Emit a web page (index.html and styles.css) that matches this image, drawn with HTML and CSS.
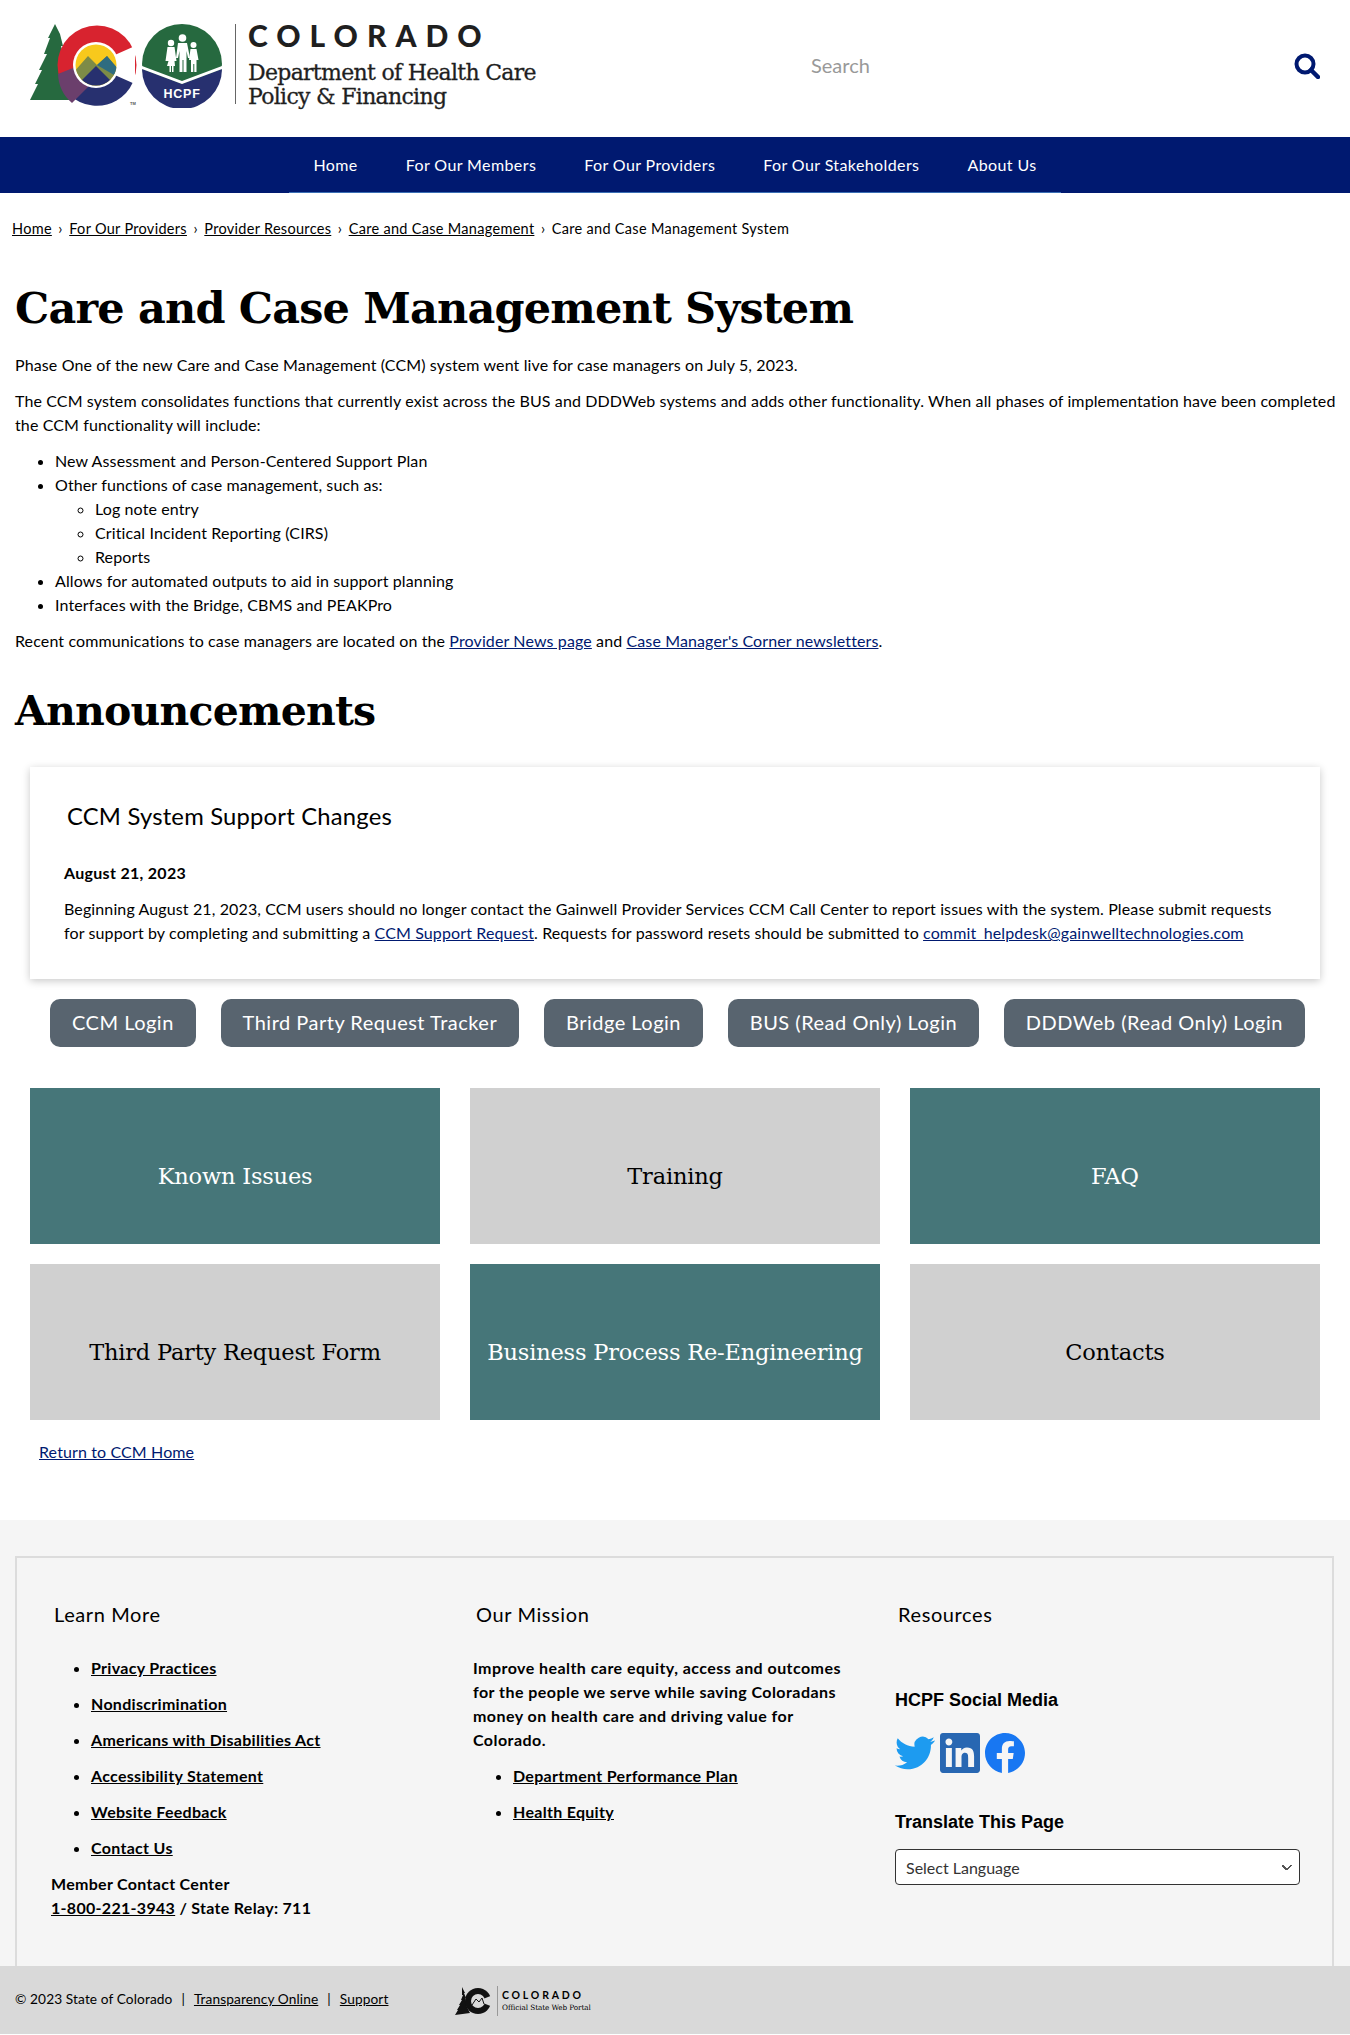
FILE: index.html
```html
<!DOCTYPE html>
<html lang="en">
<head>
<meta charset="utf-8">
<title>Care and Case Management System</title>
<link rel="stylesheet" href="styles.css">
</head>
<body>
<header class="site-header">
  <a class="brand" href="#">
    <svg class="logo" width="205" height="90" viewBox="25 18 205 90" aria-label="HCPF logo">
      <path d="M55 24l5 10 3 12-2 0 4 14-1 0 8 40-42 0 8-16-3 0 7-14-3 0 8-16-3 0 6-16-2 0z" fill="#26693f"/>
      <circle cx="97" cy="65" r="39.5" fill="#d8232f"/>
      <path d="M58 74a39.500 39.500 0 0 0 75 8l-20-8-55 0z" fill="#27306f"/>
      <path d="M58 74l20-8 14 17-20 20a40 40 0 0 1-14-29z" fill="#6b3f6c"/>
      <path d="M135 46L135 84 108 72 108 58z" fill="#fff"/>
      <circle cx="96" cy="65" r="23" fill="#fff"/>
      <clipPath id="sun"><circle cx="96" cy="65" r="20.500"/></clipPath>
      <g clip-path="url(#sun)">
        <rect x="74" y="43" width="44" height="44" fill="#f8c91c"/>
        <path d="M74 72l14-16 9 9 10-9 12 14v18H74z" fill="#7d8b47"/>
        <path d="M97 65l10-9 12 14v8z" fill="#2f6c80"/>
        <path d="M74 88l22-22 22 22z" fill="#27306f"/>
      </g>
      <text class="tm" x="136" y="105" text-anchor="end">TM</text>
      <circle cx="182" cy="64" r="40" fill="#26693f"/>
      <path d="M142 69l40 15 40-15a40 40 0 0 1-80 0z" fill="#27306f"/>
      <path d="M142 66l40 15 40-15 0 3-40 15-40-15z" fill="#fff"/>
      <g fill="#fff">
        <circle cx="171" cy="43" r="3.200"/>
        <path d="M167.500 47h7l2 14h-2l.5 5h-1.500v6h-1.500v-6h-1v6H169.500v-6H167l1.500-5h-3z"/>
        <circle cx="182.500" cy="38" r="3.800"/>
        <path d="M178 43h9l3 15h-2l-1.500-7v21h-3v-12h-1v12h-3V51l-1.500 7h-2z"/>
        <circle cx="193.500" cy="45" r="3"/>
        <path d="M190.500 49h6l2 11h-2v12h-2.200v-8h-1v8h-2.300V60h-2z"/>
      </g>
      <text class="hcpf" x="182" y="98" text-anchor="middle">HCPF</text>
    </svg>
    <span class="brand-rule"></span>
    <span class="brand-text">
      <span class="brand-state">COLORADO</span>
      <span class="brand-dept">Department of Health Care<br>Policy &amp; Financing</span>
    </span>
  </a>
  <form class="search">
    <span class="search-label">Search</span>
    <svg class="search-icon" width="26" height="26" viewBox="0 0 26 26" aria-hidden="true">
      <circle cx="11" cy="11" r="8.500" fill="none" stroke="#001970" stroke-width="4"/>
      <path d="M17 17l7 7" stroke="#001970" stroke-width="4.500" stroke-linecap="round"/>
    </svg>
  </form>
</header>

<nav class="main-nav">
  <ul class="nav-list">
    <li><a href="#">Home</a></li>
    <li><a href="#">For Our Members</a></li>
    <li><a href="#">For Our Providers</a></li>
    <li><a href="#">For Our Stakeholders</a></li>
    <li><a href="#">About Us</a></li>
  </ul>
</nav>

<div class="breadcrumb">
  <a href="#">Home</a><span class="sep">›</span><a href="#">For Our Providers</a><span class="sep">›</span><a href="#">Provider Resources</a><span class="sep">›</span><a href="#">Care and Case Management</a><span class="sep">›</span><span>Care and Case Management System</span>
</div>

<main class="content">
  <h1>Care and Case Management System</h1>
  <p>Phase One of the new Care and Case Management (CCM) system went live for case managers on July 5, 2023.</p>
  <p class="wide">The CCM system consolidates functions that currently exist across the BUS and DDDWeb systems and adds other functionality. When all phases of implementation have been completed the CCM functionality will include:</p>
  <ul class="features">
    <li>New Assessment and Person-Centered Support Plan</li>
    <li>Other functions of case management, such as:
      <ul>
        <li>Log note entry</li>
        <li>Critical Incident Reporting (CIRS)</li>
        <li>Reports</li>
      </ul>
    </li>
    <li>Allows for automated outputs to aid in support planning</li>
    <li>Interfaces with the Bridge, CBMS and PEAKPro</li>
  </ul>
  <p>Recent communications to case managers are located on the <a class="link" href="#">Provider News page</a> and <a class="link" href="#">Case Manager's Corner newsletters</a>.</p>
  <h2>Announcements</h2>

  <section class="card">
    <h3>CCM System Support Changes</h3>
    <p class="card-date">August 21, 2023</p>
    <p class="card-body">Beginning August 21, 2023, CCM users should no longer contact the Gainwell Provider Services CCM Call Center to report issues with the system. Please submit requests for support by completing and submitting a <a class="link" href="#">CCM Support Request</a>. Requests for password resets should be submitted to <a class="link" href="#">commit_helpdesk@gainwelltechnologies.com</a></p>
  </section>

  <div class="buttons">
    <a class="btn" href="#">CCM Login</a>
    <a class="btn" href="#">Third Party Request Tracker</a>
    <a class="btn" href="#">Bridge Login</a>
    <a class="btn" href="#">BUS (Read Only) Login</a>
    <a class="btn" href="#">DDDWeb (Read Only) Login</a>
  </div>

  <div class="tiles">
    <a class="tile teal" href="#">Known Issues</a>
    <a class="tile grey" href="#">Training</a>
    <a class="tile teal" href="#">FAQ</a>
    <a class="tile grey" href="#">Third Party Request Form</a>
    <a class="tile teal" href="#">Business Process Re-Engineering</a>
    <a class="tile grey" href="#">Contacts</a>
  </div>

  <p class="return"><a class="link" href="#">Return to CCM Home</a></p>
</main>

<footer class="site-footer">
  <div class="footer-box">
    <div class="footer-col">
      <h4>Learn More</h4>
      <ul class="footer-list">
        <li><a href="#">Privacy Practices</a></li>
        <li><a href="#">Nondiscrimination</a></li>
        <li><a href="#">Americans with Disabilities Act</a></li>
        <li><a href="#">Accessibility Statement</a></li>
        <li><a href="#">Website Feedback</a></li>
        <li><a href="#">Contact Us</a></li>
      </ul>
      <p class="footer-text">Member Contact Center<br><a href="#">1-800-221-3943</a> / State Relay: 711</p>
    </div>
    <div class="footer-col">
      <h4>Our Mission</h4>
      <p class="footer-text mission">Improve health care equity, access and outcomes for the people we serve while saving Coloradans money on health care and driving value for Colorado.</p>
      <ul class="footer-list">
        <li><a href="#">Department Performance Plan</a></li>
        <li><a href="#">Health Equity</a></li>
      </ul>
    </div>
    <div class="footer-col">
      <h4>Resources</h4>
      <h5 class="social-title">HCPF Social Media</h5>
      <div class="social">
        <svg width="40" height="40" viewBox="0 0 24 24" aria-label="Twitter"><path fill="#1d9bf0" d="M23.953 4.57a10 10 0 01-2.825.775 4.958 4.958 0 002.163-2.723c-.951.555-2.005.959-3.127 1.184a4.920 4.920 0 00-8.384 4.482C7.690 8.095 4.067 6.130 1.640 3.162a4.822 4.822 0 00-.666 2.475c0 1.710.870 3.213 2.188 4.096a4.904 4.904 0 01-2.228-.616v.060a4.923 4.923 0 003.946 4.827 4.996 4.996 0 01-2.212.085 4.936 4.936 0 004.604 3.417 9.867 9.867 0 01-6.102 2.105c-.390 0-.779-.023-1.170-.067a13.995 13.995 0 007.557 2.209c9.053 0 13.998-7.496 13.998-13.985 0-.210 0-.420-.015-.630A9.935 9.935 0 0024 4.590z"/></svg>
        <svg width="40" height="40" viewBox="0 0 24 24" aria-label="LinkedIn"><path fill="#2867b2" d="M20.447 20.452h-3.554v-5.569c0-1.328-.027-3.037-1.852-3.037-1.853 0-2.136 1.445-2.136 2.939v5.667H9.351V9h3.414v1.561h.046c.477-.900 1.637-1.850 3.370-1.850 3.601 0 4.267 2.370 4.267 5.455v6.286zM5.337 7.433c-1.144 0-2.063-.926-2.063-2.065 0-1.138.920-2.063 2.063-2.063 1.140 0 2.064.925 2.064 2.063 0 1.139-.925 2.065-2.064 2.065zm1.782 13.019H3.555V9h3.564v11.452zM22.225 0H1.771C.792 0 0 .774 0 1.729v20.542C0 23.227.792 24 1.771 24h20.451C23.200 24 24 23.227 24 22.271V1.729C24 .774 23.200 0 22.222 0h.003z"/></svg>
        <svg width="40" height="40" viewBox="0 0 24 24" aria-label="Facebook"><path fill="#1877f2" d="M24 12.073c0-6.627-5.373-12-12-12s-12 5.373-12 12c0 5.990 4.388 10.954 10.125 11.854v-8.385H7.078v-3.470h3.047V9.430c0-3.007 1.792-4.669 4.533-4.669 1.312 0 2.686.235 2.686.235v2.953H15.830c-1.491 0-1.956.925-1.956 1.874v2.250h3.328l-.532 3.470h-2.796v8.385C19.612 23.027 24 18.062 24 12.073z"/></svg>
      </div>
      <h5 class="translate-title">Translate This Page</h5>
      <select class="lang"><option>Select Language</option></select>
    </div>
  </div>
  <div class="footer-bar">
    <p class="legal">© 2023 State of Colorado<span class="pipe">|</span><a href="#">Transparency Online</a><span class="pipe">|</span><a href="#">Support</a></p>
    <div class="portal">
      <svg width="38" height="30" viewBox="0 0 38 30" aria-hidden="true">
        <path d="M7 1l3 6-1 0 2 5-1 0 2 9 3 6-15 2 3-5-1 0 3-5-1 0 3-5-1 0 2-5-1 0z" fill="#111"/>
        <circle cx="23" cy="15" r="13" fill="#111"/>
        <path d="M38 9v12l-10-4v-4z" fill="#d9d9d9"/>
        <circle cx="23" cy="15" r="7" fill="#d9d9d9"/>
        <path d="M17 19l4-6 3 3 3-4 2 6" fill="none" stroke="#111"/>
      </svg>
      <span class="portal-rule"></span>
      <span class="portal-text"><span class="portal-state">COLORADO</span><span class="portal-sub">Official State Web Portal</span></span>
    </div>
  </div>
</footer>
</body>
</html>
```

FILE: styles.css
```css
* { box-sizing: border-box; }
html, body { margin: 0; padding: 0; }
body {
  background: #fff;
  color: #000;
  font-family: "Lato", "Liberation Sans", sans-serif;
  font-size: 16px;
  line-height: 24px;
  letter-spacing: 0.12px;
}
a { color: inherit; }
p { margin: 0 0 12px; }

.site-header {
  height: 137px;
  display: flex;
  align-items: flex-start;
  justify-content: space-between;
}
.brand {
  display: flex;
  align-items: flex-start;
  padding: 18px 0 0 25px;
  text-decoration: none;
  color: #1f1f1f;
}
.logo { display: block; }
.tm { font: 700 4px "Liberation Sans", sans-serif; fill: #555; }
.hcpf { font: 700 12.500px "Liberation Sans", sans-serif; fill: #fff; letter-spacing: 0.8px; }
.brand-rule { width: 1px; height: 80px; background: #666; margin: 6px 12px 0 5px; }
.brand-text { display: flex; flex-direction: column; }
.brand-state {
  font: 900 30px/34px "Lato", sans-serif;
  letter-spacing: 9px;
}
.brand-dept {
  font: 400 22px/24px "DejaVu Serif", serif;
  letter-spacing: -0.7px;
  -webkit-text-stroke: 0.3px #1f1f1f;
  padding-top: 9px;
}
.search {
  width: 539px;
  height: 137px;
  display: flex;
  justify-content: space-between;
  padding: 52px 30px 0 0;
}
.search-label { color: #999; font-size: 20px; line-height: 26px; letter-spacing: 0; }
.search-icon { display: block; margin-top: 1px; }

.main-nav { background: #001970; height: 56px; }
.nav-list {
  list-style: none;
  margin: 0 auto;
  padding: 0;
  width: 772px;
  height: 56px;
  display: flex;
  justify-content: center;
  gap: 48px;
  border-bottom: 1px solid #3a6fb5;
}
.nav-list a {
  display: block;
  color: #fff;
  text-decoration: none;
  line-height: 56px;
  letter-spacing: 0.4px;
}

.breadcrumb { padding: 24px 12px 0; font-size: 14.500px; line-height: 24px; height: 48px; letter-spacing: 0.3px; }
.sep { margin: 0 6.500px; }

.content { padding: 0 15px; }
.wide { margin-right: -7px; }
h1, h2 {
  font-family: "DejaVu Serif", serif;
  font-weight: 700;
  margin: 0;
}
h1 { font-size: 43px; line-height: 60px; letter-spacing: -0.83px; padding-top: 37px; margin-bottom: 15px; }
h2 { font-size: 41px; line-height: 56px; letter-spacing: -0.8px; margin: 30px 0 28px; }
.features { margin: 0 0 12px; padding-left: 40px; }
.features ul { margin: 0; padding-left: 40px; list-style: circle; }
.link { color: #001970; }

.card {
  margin: 0 15px 20px;
  height: 212px;
  background: #fff;
  box-shadow: 0 2px 8px rgba(0, 0, 0, 0.22);
  padding: 33px 34px 0;
}
.card h3 {
  font-size: 23.800px;
  font-weight: 400;
  line-height: 32px;
  margin: 0 0 29px 3px;
  letter-spacing: 0.2px;
}
.card-date { font-weight: 700; margin-bottom: 12px; letter-spacing: 0.3px; }
.card-body { margin: 0; }

.buttons {
  display: flex;
  justify-content: space-between;
  margin: 0 30px 41px 35px;
}
.btn {
  display: block;
  height: 48px;
  line-height: 46px;
  padding: 0 22px;
  background: #58646f;
  border-radius: 10px;
  color: #fff;
  text-decoration: none;
  font-size: 20px;
  letter-spacing: 0.5px;
}

.tiles {
  display: grid;
  grid-template-columns: repeat(3, 410px);
  grid-auto-rows: 156px;
  gap: 20px 30px;
  margin: 0 15px;
}
.tile {
  display: flex;
  align-items: center;
  justify-content: center;
  padding-top: 20px;
  font-family: "DejaVu Serif", serif;
  font-size: 22.500px;
  letter-spacing: -0.2px;
  text-decoration: none;
  white-space: nowrap;
}
.teal { background: #467679; color: #fff; }
.grey { background: #d0d0d0; color: #000; }
.return { margin: 20px 0 0 24px; }

.site-footer {
  margin-top: 56px;
  background: #f5f5f5;
  padding-top: 36px;
}
.footer-box {
  margin: 0 16px 0 15px;
  height: 410px;
  border: 2px solid #dcdcdc;
  border-bottom: 0;
  padding: 43px 22px 0;
  display: grid;
  grid-template-columns: 422px 422px 1fr;
  font-weight: 700;
  letter-spacing: 0.3px;
}
.footer-col { padding: 0 12px; }
.footer-col h4 {
  font-size: 20px;
  font-weight: 400;
  line-height: 26px;
  margin: 0 0 29px 3px;
  letter-spacing: 0.6px;
}
.footer-list { list-style: disc; margin: 0 0 12px; padding-left: 40px; }
.footer-list li { margin-bottom: 12px; }
.footer-text { margin: 0 0 12px; }
.mission { max-width: 385px; letter-spacing: 0.45px; }
.social-title, .translate-title {
  font: 700 18px/24px "Liberation Sans", sans-serif;
  letter-spacing: 0;
  margin: 0;
}
.social-title { padding-top: 32px; }
.social { display: flex; gap: 5px; margin: 21px 0 37px; }
.social svg { display: block; }
.lang {
  display: block;
  width: 405px;
  height: 36px;
  margin-top: 15px;
  padding-left: 10px;
  appearance: none;
  background-color: #fff;
  background-image:
    linear-gradient(45deg, transparent 40%, #555 40%, #555 65%, transparent 65%),
    linear-gradient(-45deg, transparent 40%, #555 40%, #555 65%, transparent 65%);
  background-size: 5px 5px;
  background-position: right 12px center, right 7px center;
  background-repeat: no-repeat;
  border: 1px solid #333;
  border-radius: 4px;
  color: #333;
  font: 400 16px "Lato", sans-serif;
}

.footer-bar {
  height: 68px;
  background: #d9d9d9;
  display: flex;
  align-items: flex-start;
  padding: 21px 0 0 15px;
  font-size: 13.700px;
  line-height: 24px;
  letter-spacing: 0.1px;
  margin-bottom: 2px;
}
.legal { margin: 0; width: 440px; }
.pipe { margin: 0 9px; }
.portal { display: flex; align-items: center; margin-top: -1px; }
.portal-rule { width: 1px; height: 30px; background: #999; margin: 0 4px; }
.portal-text { display: flex; flex-direction: column; }
.portal-state { font: 700 10.500px/14px "Lato", sans-serif; letter-spacing: 2.800px; }
.portal-sub { font: 400 7.300px/12px "DejaVu Serif", serif; letter-spacing: -0.1px; }
```
